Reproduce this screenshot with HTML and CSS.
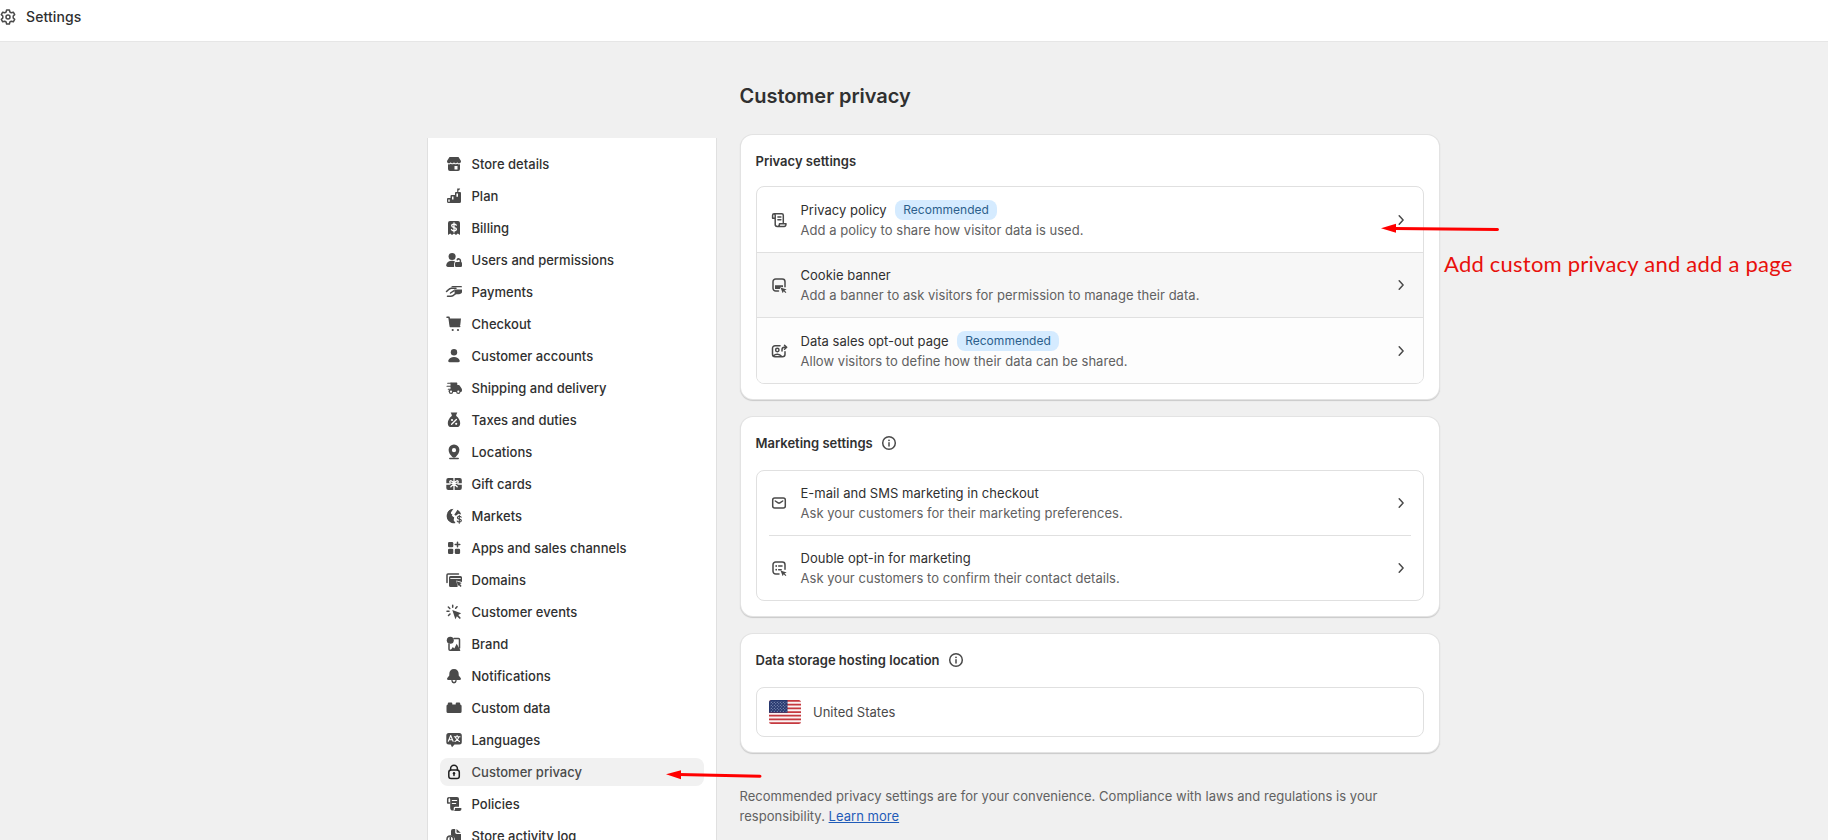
FILE: index.html
```html
<!DOCTYPE html>
<html lang="en">
<head>
<meta charset="utf-8">
<title>Settings - Customer privacy</title>
<link rel="stylesheet" href="styles.css">
</head>
<body>
<header class="topbar">
  <svg class="topbar-icon" viewBox="0 0 20 20"><path class="s" d="M8.6 3h2.8l.5 2 1.4.8 2-.6 1.4 2.4L15.200 9v2l1.500 1.400-1.400 2.400-2-.6-1.400.8-.5 2H8.600l-.5-2-1.400-.8-2 .6-1.400-2.400L4.800 11V9L3.300 7.600l1.400-2.400 2 .6L8.100 5z"/><circle class="s" cx="10" cy="10" r="2"/></svg>
  <span>Settings</span>
</header>
<div class="layout">
  <nav class="sidebar">
    <a class="item"><svg viewBox="0 0 20 20"><path d="M5.500 3h9l2.500 4c0 1.500-.8 2.300-2 2.300S13.400 8.700 13.300 8c-.3.8-.9 1.300-1.700 1.300S10.200 8.700 10 8c-.2.700-.8 1.300-1.600 1.300S7 8.800 6.700 8c-.1.700-.6 1.300-1.800 1.300S3 8.500 3 7z"/><path d="M4 10.300c1.200.3 2 0 2.800-.6 1 .8 2.300.8 3.200 0 .9.800 2.200.8 3.200 0 .8.600 1.600.9 2.800.6V15a2 2 0 0 1-2 2H6a2 2 0 0 1-2-2z"/><path class="w" d="M10.500 12h3v3.500h-3z"/></svg>Store details</a>
    <a class="item"><svg viewBox="0 0 20 20"><path d="M3 13a1 1 0 0 1 1-1h2.500V10a1 1 0 0 1 1-1H11V7a1 1 0 0 1 1-1h4a1 1 0 0 1 1 1v8.500a1.500 1.500 0 0 1-1.500 1.500h-11A1.500 1.500 0 0 1 3 15.500z"/><path d="M13.200 6V2.500h3L15.300 4l-1 .4V6z"/><path class="w" d="M4.300 13.400h1.400v2.300H4.300zM8 10.500h1.500v3H8zM12.400 7.500H14v3.200h-1.600z"/></svg>Plan</a>
    <a class="item"><svg viewBox="0 0 20 20"><path d="M4 5a2 2 0 0 1 2-2h8a2 2 0 0 1 2 2v12l-2.200-1.500L12 17l-2-1.500L8 17l-1.800-1.500L4 17z"/><path class="ws" d="M12.300 7.200C12 6.500 11.200 6.100 10 6.100c-1.400 0-2.300.7-2.300 1.700 0 2.500 4.700 1 4.700 3.300 0 1-.9 1.700-2.400 1.700-1.300 0-2.200-.5-2.500-1.300M10 4.800V14"/></svg>Billing</a>
    <a class="item"><svg viewBox="0 0 20 20"><circle cx="8.100" cy="6.500" r="3.500"/><path d="M2.200 15c.6-3 2.900-4.200 5.900-4.200 1.200 0 2.200.2 3 .6-.7.800-1 1.500-1 2.600v2.900H4c-1.300 0-2-.8-1.800-1.900z"/><rect x="11" y="12" width="7" height="5" rx="1.300"/><path class="s" d="M16.400 12.200V10.500a1.700 1.700 0 0 0-3.200-.7"/></svg>Users and permissions</a>
    <a class="item"><svg viewBox="0 0 20 20"><path d="M8.500 4H17a1 1 0 0 1 1 1v.3H6.600zM10 7.500h8V10c0 1.300-1.700 2.200-3 2.200h-4z"/><path class="s" d="M2.500 9.500C4.500 8 5 6.200 7.400 6.200H12M3.500 14.300H7c2.400 0 2.900-1.400 5.500-3.700M6.500 11l3.200-2.200"/></svg>Payments</a>
    <a class="item"><svg viewBox="0 0 20 20"><path class="s" d="M3 3.200h2l1.300 9.300h9.400"/><path d="M4.800 4.500H17l-.7 6.300c-.1.800-.5 1.200-1.300 1.200H6.200z"/><circle cx="8.700" cy="16" r="1.100"/><circle cx="14" cy="16" r="1.100"/></svg>Checkout</a>
    <a class="item"><svg viewBox="0 0 20 20"><circle cx="10" cy="6.200" r="3.200"/><path d="M4.300 14.600C5 12.200 7.200 11 10 11s5 1.200 5.700 3.600c.3 1-.4 1.700-1.300 1.700H5.600c-.9 0-1.600-.7-1.300-1.700z"/></svg>Customer accounts</a>
    <a class="item"><svg viewBox="0 0 20 20"><path class="s thin" d="M3.700 5.200h3.500M3 8.200h4M4.300 11.200h2"/><path d="M6.500 4.500h5.800c.6 0 1 .4 1 1V7h1.200c.6 0 1 .3 1.300.8l1.800 2.700c.3.500.4.900.4 1.500 0 1.500-.5 2-1.500 2H5.500c-.6 0-1-.6-1-1.300L6.500 11z"/><circle cx="7" cy="13.700" r="2.200"/><circle cx="14.300" cy="13.700" r="2.200"/><circle class="w" cx="7" cy="13.700" r="1.100"/><circle class="w" cx="14.300" cy="13.700" r="1.100"/></svg>Shipping and delivery</a>
    <a class="item"><svg viewBox="0 0 20 20"><path d="M6.700 2.500h6.600L12.200 5v1.500H7.800V5zM7.700 6h4.600c2.500 2 3.900 4.700 3.900 7.200 0 2.600-1.400 3.900-3.500 3.900H7.300c-2.100 0-3.500-1.300-3.500-3.900C3.800 10.700 5.200 8 7.700 6z"/><path class="ws" d="M7.600 14.300l4.800-4.800"/><circle class="w" cx="8" cy="10" r="1.100"/><circle class="w" cx="12.200" cy="13.800" r="1.100"/></svg>Taxes and duties</a>
    <a class="item"><svg viewBox="0 0 20 20"><path fill-rule="evenodd" d="M10 2.500a5.300 5.300 0 0 1 5.400 5.300c0 3-1.700 5.100-3.700 7.200-1 1-2.400 1-3.400 0-2-2.100-3.700-4.200-3.700-7.200A5.300 5.300 0 0 1 10 2.500zm0 3.600a2.100 2.100 0 1 0 0 4.200 2.100 2.100 0 0 0 0-4.200z"/><path class="s" d="M5.800 16.600h8.400"/></svg>Locations</a>
    <a class="item"><svg viewBox="0 0 20 20"><rect x="2.300" y="4" width="15.500" height="12" rx="2"/><path class="ws" d="M10 4v12M2 10h4M14 10h4M10 9.500C8.500 6 5.500 6.300 5.800 8c.2 1.500 2.200 1.500 4.200 1.500 2 0 4 0 4.200-1.500.3-1.700-2.700-2-4.200 1.500zM10 9.700l-3.200 3M10 9.700l3.200 3"/></svg>Gift cards</a>
    <a class="item"><svg viewBox="0 0 20 20"><path d="M9.500 2.800c-1 1.700-2 2.200-2.700 3.700-.4 1 .3 1.500 1.500 2L8 10l2.200 1.500L9.500 14l2 3a7.200 7.200 0 0 1-8.600-8.600l3.300 3.100 2.500 4 .5-3.500-2-2.500L3.500 7A7.200 7.200 0 0 1 9.500 2.800z"/><path d="M2.900 8.500A7.200 7.200 0 0 1 8 3l-1.200 4L8 10l2 2-1 2.500 1.200 2.600A7.200 7.200 0 0 1 2.900 8.500z"/><path d="M13.500 3.700c1.800 1 3.200 2.700 3.600 4.800l-2.600-.7-2.700 2-1.500-1z"/><path class="s thin" d="M17.200 11.300c-.3-.6-1-1-1.900-1-1.100 0-1.900.5-1.900 1.400 0 2 4 .9 4 2.900 0 .9-.8 1.500-2.100 1.500-1 0-1.800-.4-2.100-1.100M15.300 9.300v8"/></svg>Markets</a>
    <a class="item"><svg viewBox="0 0 20 20"><rect x="4" y="4" width="5.300" height="5.300" rx="1.300"/><rect x="4" y="10.800" width="5.300" height="5.300" rx="1.300"/><rect x="10.800" y="10.800" width="5.300" height="5.300" rx="1.300"/><path class="s" d="M13.500 4.200v4.600M11.200 6.500h4.600"/></svg>Apps and sales channels</a>
    <a class="item"><svg viewBox="0 0 20 20"><path class="s" d="M3 12.500V5a1 1 0 0 1 1-1h10.500"/><path d="M5 7.500A1.500 1.500 0 0 1 6.500 6h10A1.500 1.500 0 0 1 18 7.500V12l-5.700-1.600 1.300 6.600H6.500A1.500 1.500 0 0 1 5 15.500z"/><path class="w" d="M6.300 8h10.400v.9H6.300z"/><path d="M12.800 11.200l5 1.700-1.800 1.200 1.600 1.900-1.200 1-1.600-1.900-1 1.500z"/></svg>Domains</a>
    <a class="item"><svg viewBox="0 0 20 20"><path d="M8.300 8l8.900 3.200-3 1.700 2.700 3-1.100 1.100-2.900-2.700-1.500 3z"/><path class="s" d="M8.700 5.300V3.200M5.800 6.500L4.300 5M5 9.300H3M6 12l-1.500 1.500M11.700 6.300L13 4.700"/></svg>Customer events</a>
    <a class="item"><svg viewBox="0 0 20 20"><path class="s" d="M10 4.500h4.500a1 1 0 0 1 1 1V14M5 10v5.300a1 1 0 0 0 1 1h8"/><circle cx="6.300" cy="6.300" r="3.500"/><path d="M6.500 16.500l2.300-3.500 1.500 1.500L12.700 9.800 16.200 16v1z"/></svg>Brand</a>
    <a class="item"><svg viewBox="0 0 20 20"><path d="M10 3c3 0 4.700 2 4.700 5v1.500l2 2.500c.6 1 .1 2-1 2H4.300c-1.100 0-1.600-1-1-2l2-2.500V8C5.300 5 7 3 10 3z"/><path class="s" d="M8 14.700c.2 1.500 1 2 2 2s1.800-.5 2-2"/></svg>Notifications</a>
    <a class="item"><svg viewBox="0 0 20 20"><path d="M2.500 8a1.500 1.500 0 0 1 1.300-1.500V5.500A1 1 0 0 1 4.800 4.500h2.500a1 1 0 0 1 1 1v1h3.400v-1a1 1 0 0 1 1-1h2.500a1 1 0 0 1 1 1v1A1.500 1.500 0 0 1 17.600 8v5.500a1.500 1.500 0 0 1-1.500 1.500H4a1.500 1.500 0 0 1-1.500-1.500z"/></svg>Custom data</a>
    <a class="item"><svg viewBox="0 0 20 20"><path d="M2.300 5.500A2.500 2.500 0 0 1 4.800 3h10.500a2.500 2.500 0 0 1 2.500 2.500V12a2.500 2.500 0 0 1-2.500 2.500H10.500L8 17.200l-1.300-2.700H4.800A2.500 2.500 0 0 1 2.300 12z"/><path class="ws thin" d="M4.300 11.300l2.400-5.800 2.400 5.800M5.200 9.700h3M10.300 6.800H16M13.100 5.500v1.200M11 11.500c2-.9 3.400-2.300 3.900-4.600M11.300 7.200c.6 2 2 3.500 4.200 4.300"/></svg>Languages</a>
    <a class="item active"><svg viewBox="0 0 20 20"><rect class="s" x="4.800" y="8" width="10.500" height="8.500" rx="2.300"/><path class="s" d="M6.600 8V6.700a3.400 3.400 0 0 1 6.800 0V8"/><circle cx="10" cy="11.300" r="1.200"/><path class="s" d="M10 11.500v2"/></svg>Customer privacy</a>
    <a class="item"><svg viewBox="0 0 20 20"><path class="s" d="M5.500 9H3.700V5a1.300 1.300 0 0 1 1.300-1.300"/><path d="M5 3h8a2 2 0 0 1 2 2v7.800h-3.700c-1.300 0-1.600.7-1.600 1.700v2c-2 .3-3.500-.6-3.500-2.500V5z"/><path d="M11 14h6.300c.5 1.700-.5 3-2 3H9.500c1 0 1.500-1 1.500-3z"/><path class="ws thin" d="M8.300 6.500h4.400M8.300 9.500h3.400"/></svg>Policies</a>
    <a class="item"><svg viewBox="0 0 20 20"><path d="M7 5a2 2 0 0 1 2-2h2.200v3.300c0 1 .6 1.600 1.600 1.600H17V15a2 2 0 0 1-2 2h-4.500c1.700-3.500-.3-7.300-3.500-7.500zM12.500 3l4.300 3.700h-3.500c-.5 0-.8-.3-.8-.8z"/><circle class="s" cx="6.300" cy="13.300" r="3.300"/><path class="s" d="M6.300 11.500v2"/></svg>Store activity log</a>
  </nav>
  <main class="content">
    <h1>Customer privacy</h1>
    <section class="card">
      <h2>Privacy settings</h2>
      <div class="list">
        <div class="row tagged">
          <svg viewBox="0 0 20 20"><path class="s" d="M5.700 8.300H3.600V5.200A1.500 1.500 0 0 1 5.100 3.700h7.700a1.500 1.500 0 0 1 1.500 1.500v7.300M5.200 3.700c.7.300 1 .8 1 1.600v9.200c0 1.200.8 1.900 2 1.900h7c1.200 0 1.800-.8 1.800-2.700h-6.500c0 1.800-.6 2.700-1.800 2.700M8.900 7h3M8.900 9.700h3"/></svg>
          <div class="text"><div class="title">Privacy policy <span class="badge">Recommended</span></div><p>Add a policy to share how visitor data is used.</p></div>
          <svg class="chev" viewBox="0 0 20 20"><path class="s" d="M8.200 5.800l3.900 4.200-3.900 4.200"/></svg>
        </div>
        <div class="row hovered">
          <svg viewBox="0 0 20 20"><path class="s" d="M9.500 16H6.700A2.700 2.700 0 0 1 4 13.300V6.700A2.700 2.700 0 0 1 6.700 4h6.600A2.700 2.700 0 0 1 16 6.700v5"/><path d="M6 10.200h8v2l-2.200-.5-1 2.300H6zM11.500 12.500l6.200 2-2.200 1 1.900 1.700-.9.900-1.800-1.900-1 2z"/></svg>
          <div class="text"><div class="title">Cookie banner</div><p>Add a banner to ask visitors for permission to manage their data.</p></div>
          <svg class="chev" viewBox="0 0 20 20"><path class="s" d="M8.200 5.800l3.900 4.200-3.900 4.200"/></svg>
        </div>
        <div class="row tagged faint">
          <svg viewBox="0 0 20 20"><path class="s" d="M11 4.800H6A2.500 2.500 0 0 0 3.500 7.300v6A2.500 2.500 0 0 0 6 15.800h7.500a2.500 2.500 0 0 0 2.500-2.500v-2.500M13 10V8.500A2.300 2.300 0 0 1 15.300 6.200h2M15.500 4.200l2.200 2-2.200 2M4.600 14.800c2-2.300 5.800-2.300 7.800.5"/><circle class="s" cx="8.300" cy="9" r="1.700"/></svg>
          <div class="text"><div class="title">Data sales opt-out page <span class="badge">Recommended</span></div><p>Allow visitors to define how their data can be shared.</p></div>
          <svg class="chev" viewBox="0 0 20 20"><path class="s" d="M8.200 5.800l3.900 4.200-3.900 4.200"/></svg>
        </div>
      </div>
    </section>
    <section class="card spaced">
      <h2>Marketing settings <svg viewBox="0 0 20 20"><circle class="s" cx="10" cy="10" r="6.300"/><circle cx="10" cy="7.300" r=".9"/><path class="s" d="M10 9.800v3.200"/></svg></h2>
      <div class="list">
        <div class="row inset">
          <svg viewBox="0 0 20 20"><rect class="s" x="3.700" y="5" width="12.600" height="10" rx="2"/><path class="s" d="M6.300 8l2.800 1.900c.6.300 1.200.3 1.800 0L13.700 8"/></svg>
          <div class="text"><div class="title">E-mail and SMS marketing in checkout</div><p>Ask your customers for their marketing preferences.</p></div>
          <svg class="chev" viewBox="0 0 20 20"><path class="s" d="M8.200 5.800l3.900 4.200-3.900 4.200"/></svg>
        </div>
        <div class="row">
          <svg viewBox="0 0 20 20"><path class="s" d="M10 16H6.700A2.700 2.700 0 0 1 4 13.300V6.700A2.700 2.700 0 0 1 6.700 4h6.600A2.700 2.700 0 0 1 16 6.700v4.500M9.700 8h3.300M9.700 11.700h2.500"/><circle cx="7.200" cy="8" r=".9"/><circle cx="7.200" cy="11.700" r=".9"/><path d="M11.500 12.500l6.200 2-2.200 1 1.900 1.700-.9.900-1.800-1.900-1 2z"/></svg>
          <div class="text"><div class="title">Double opt-in for marketing</div><p>Ask your customers to confirm their contact details.</p></div>
          <svg class="chev" viewBox="0 0 20 20"><path class="s" d="M8.200 5.800l3.900 4.200-3.900 4.200"/></svg>
        </div>
      </div>
    </section>
    <section class="card spaced">
      <h2>Data storage hosting location <svg viewBox="0 0 20 20"><circle class="s" cx="10" cy="10" r="6.300"/><circle cx="10" cy="7.300" r=".9"/><path class="s" d="M10 9.800v3.200"/></svg></h2>
      <div class="list country">
        <svg class="flag" viewBox="0 0 32 24"><defs><clipPath id="fc"><rect width="32" height="24" rx="2.500"/></clipPath><pattern id="stars" width="3" height="3" patternUnits="userSpaceOnUse"><circle cx=".8" cy=".8" r=".55" fill="#a9b4d3"/><circle cx="2.300" cy="2.300" r=".55" fill="#a9b4d3"/></pattern></defs><g clip-path="url(#fc)"><path fill="#fbf3f3" d="M0 0h32v24H0z"/><path stroke="#c5393f" stroke-width="1.750" d="M0 .9h32M0 4.600h32M0 8.300h32M0 12h32M0 15.700h32M0 19.400h32M0 23.100h32"/><path fill="#27386f" d="M0 0h18.500v12.800H0z"/><path fill="url(#stars)" d="M1 1h16.500v11H1z"/></g></svg>
        <span>United States</span>
      </div>
    </section>
    <p class="note">Recommended privacy settings are for your convenience. Compliance with laws and regulations is your responsibility. <a>Learn more</a></p>
  </main>
</div>
<svg class="arrow arrow-top" viewBox="0 0 120 12"><path d="M0 5.300L15 .8v9z"/><path class="shaft" d="M13 5.400L116.500 6.500"/></svg>
<svg class="arrow arrow-side" viewBox="0 0 98 12"><path d="M0 5.300L15 1.200v9z"/><path class="shaft" d="M13 5.500L94 7.300"/></svg>
<div class="callout">Add custom privacy and add a page</div>
</body>
</html>
```
FILE: styles.css
```css
* { box-sizing: border-box; }
body {
  margin: 0;
  height: 840px;
  overflow: hidden;
  position: relative;
  background: #f0f0f0;
  color: #303030;
  font: 13px/20px Inter, sans-serif;
}
h1, h2, p { margin: 0; }
svg { width: 20px; height: 20px; flex: none; fill: #4a4a4a; }
.s { fill: none; stroke: #4a4a4a; stroke-width: 1.5; stroke-linecap: round; stroke-linejoin: round; }
.w { fill: #fff; }
.ws { fill: none; stroke: #fff; stroke-width: 1.3; stroke-linecap: round; stroke-linejoin: round; }
.thin { stroke-width: 1.1; }

.topbar {
  display: flex;
  align-items: center;
  gap: 8px;
  height: 42px;
  padding: 0 0 7px;
  background: #fff;
  border-bottom: 1px solid #e6e6e6;
  font-size: 14px;
  font-weight: 500;
  letter-spacing: .1px;
}
.topbar-icon { margin-left: -2px; }

.layout { display: flex; align-items: flex-start; gap: 23px; padding-left: 427px; }
.sidebar {
  display: flex;
  flex-direction: column;
  gap: 4px;
  width: 290px;
  margin-top: 96px;
  padding: 12px;
  background: #fff;
  border: solid #e0e0e0;
  border-width: 0 1px;
}
.item {
  display: flex;
  align-items: center;
  gap: 7.5px;
  height: 28px;
  padding: 0 4px;
  border-radius: 8px;
  font-weight: 500;
  letter-spacing: .02px;
}
.active { background: #f1f1f1; color: #4a4a4a; }
.active svg { fill: #1f1f1f; }
.active .s { stroke: #1f1f1f; }

.content { width: 700px; padding: 0 0 0 1px; }
h1 { margin: 40px 0 25px -1.5px; font-size: 20px; line-height: 28px; font-weight: 600; letter-spacing: -.03px; }
.card {
  width: 698px;
  margin-bottom: 18px;
  padding: 16px 15px 15px;
  background: #fff;
  border-radius: 12px;
  box-shadow: 0 0 0 1px #e3e3e3, 0 1px 1px 1px #c9c9c9;
}
h2 {
  display: flex;
  align-items: center;
  gap: 6px;
  margin-left: -.5px;
  font-size: 13px;
  line-height: 20px;
  font-weight: 600;
}
.list { margin-top: 15px; border: 1px solid #e0e0e0; border-radius: 8px; overflow: hidden; }
.spaced .list { margin-top: 17px; }
.row {
  display: flex;
  align-items: center;
  height: 64px;
  padding: 0 12px;
}
.row + .row { border-top: 1px solid #e0e0e0; height: 65px; }
.tagged { height: 65px; }
.row + .tagged { height: 66px; }
.hovered { background: #f7f7f7; }
.faint { background: #fdfdfd; }
.inset + .row { margin: 0 12px; padding: 0; }
.text { flex: 1; padding-left: 11.5px; letter-spacing: .03px; }
.title { display: flex; align-items: center; gap: 8.5px; height: 20px; }
.tagged .title { height: 21px; }
.row p { color: #616161; }
.badge {
  padding: 0 8px;
  border-radius: 8px;
  background: #d5ebff;
  color: #2c5f8c;
  font-size: 12px;
  line-height: 20px;
}
.country { display: flex; align-items: center; gap: 12px; height: 50px; padding: 0 12px; color: #4a4a4a; }
.flag { width: 32px; height: 24px; }
.note { margin: 34px 0 0 -1.5px; color: #616161; width: 660px; letter-spacing: .03px; }
.note a { color: #1f5bb8; text-decoration: underline; }

/* hand-drawn annotations over the page */
.arrow { position: absolute; fill: #f00; height: 12px; }
.shaft { stroke: #f00; stroke-width: 3; stroke-linecap: round; }
.arrow-top { left: 1381px; top: 223px; width: 120px; }
.arrow-side { left: 666px; top: 769px; width: 98px; }
.callout {
  position: absolute;
  left: 1444px;
  top: 250px;
  color: #e8100c;
  font: 22px/28px Lato, sans-serif;
  letter-spacing: .23px;
  white-space: nowrap;
}
```
